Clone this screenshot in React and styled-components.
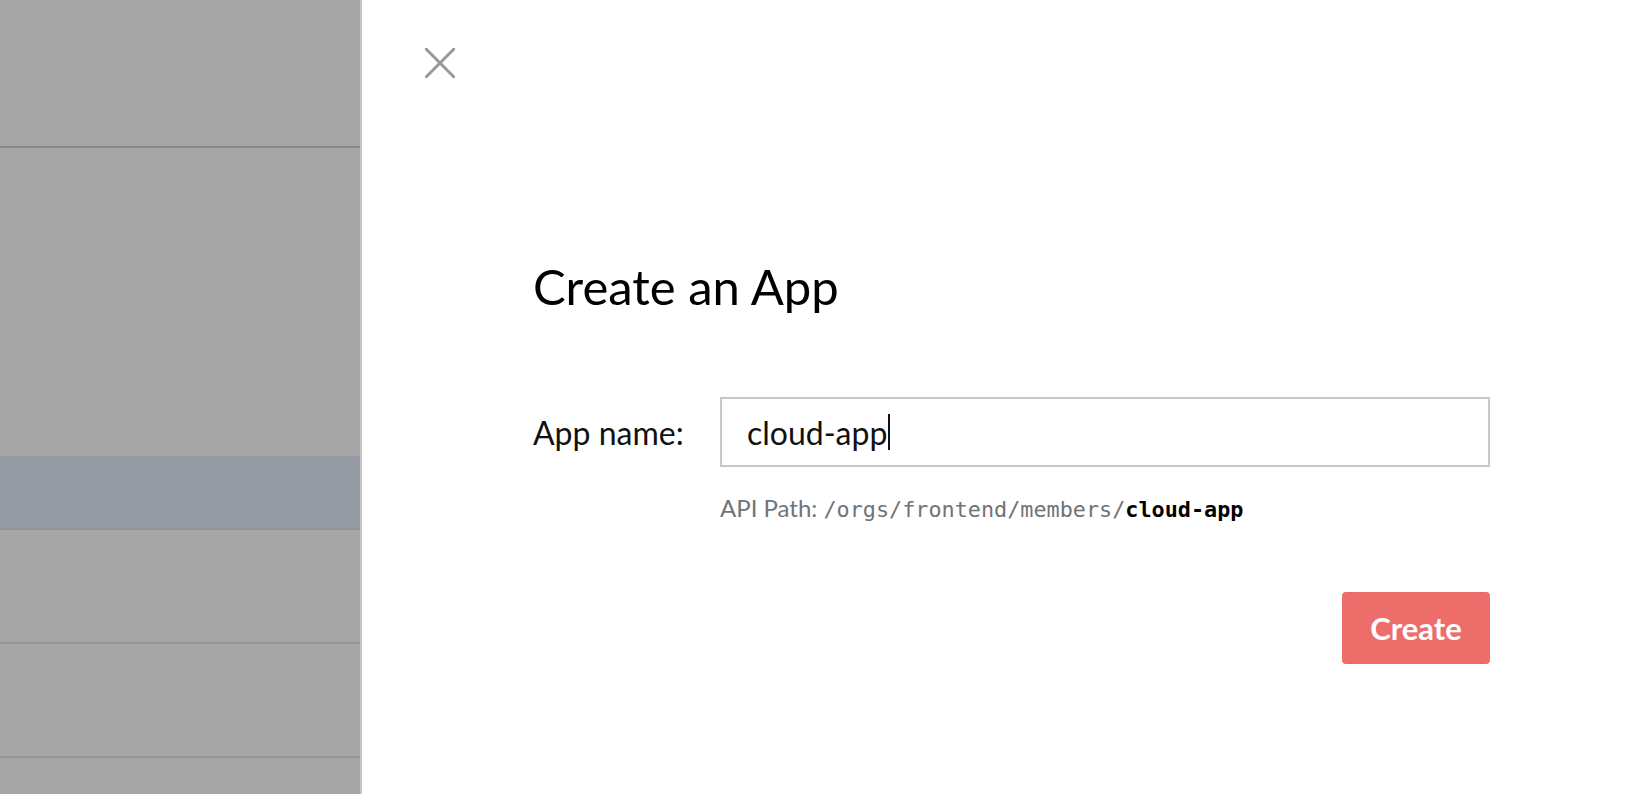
import React from 'react';
import styled, { createGlobalStyle } from 'styled-components';

const GlobalStyle = createGlobalStyle`
  html, body {
    margin: 0;
    padding: 0;
    height: 100%;
    overflow: hidden;
  }
  body {
    font-family: Lato, "Noto Sans", sans-serif;
    background: #fff;
  }
`;

const Page = styled.div`
  display: flex;
  width: 1646px;
  height: 794px;
`;

const Backdrop = styled.div`
  width: 360px;
  flex-shrink: 0;
  background: #a6a6a6;
  border-right: 2px solid #c6c6c6;
  display: flex;
  flex-direction: column;
`;

const Row = styled.div`
  box-sizing: border-box;
  height: ${(p) => p.$h}px;
  flex-shrink: 0;
  background: ${(p) => (p.$active ? '#979ba3' : 'transparent')};
  border-bottom: ${(p) => (p.$line ? `2px solid ${p.$line}` : 'none')};
`;

const Drawer = styled.div`
  flex: 1;
  background: #fff;
  padding: 48px 0 0 63px;
  display: flex;
  flex-direction: column;
`;

const CloseButton = styled.button`
  width: 30px;
  height: 30px;
  padding: 0;
  border: none;
  background: none;
  cursor: pointer;
  svg {
    display: block;
  }
`;

const Content = styled.div`
  margin: 179px 0 0 108px;
  width: 957px;
  display: flex;
  flex-direction: column;
`;

const Title = styled.h1`
  margin: 0;
  font-size: 49px;
  line-height: 58px;
  font-weight: 400;
  color: #000;
`;

const FieldRow = styled.div`
  display: flex;
  align-items: center;
  margin-top: 82px;
`;

const Label = styled.label`
  width: 187px;
  font-size: 32px;
  color: #111;
`;

const Input = styled.div`
  flex: 1;
  height: 70px;
  box-sizing: border-box;
  border: 2px solid #c8c8c8;
  padding: 0 25px;
  display: flex;
  align-items: center;
  font-size: 32px;
  color: #111;
`;

const Caret = styled.span`
  display: inline-block;
  width: 2px;
  height: 36px;
  background: #111;
  margin-left: 1px;
  vertical-align: middle;
`;

const Hint = styled.div`
  margin: 26px 0 0 187px;
  font-size: 24px;
  color: #6f7479;
`;

const Code = styled.code`
  font-family: "DejaVu Sans Mono", "Liberation Mono", monospace;
  font-size: 21.8px;
  color: ${(p) => (p.$strong ? '#000' : '#6f7479')};
  font-weight: ${(p) => (p.$strong ? 700 : 400)};
`;

const Actions = styled.div`
  display: flex;
  justify-content: flex-end;
  margin-top: 70px;
`;

const PrimaryButton = styled.button`
  width: 148px;
  height: 72px;
  border: none;
  border-radius: 4px;
  background: #ed6d6b;
  color: #fff;
  font-family: Lato, "Noto Sans", sans-serif;
  font-size: 31px;
  font-weight: 700;
  cursor: pointer;
`;

export default function App() {
  return (
    <>
      <GlobalStyle />
      <Page>
        <Backdrop>
          <Row $h={148} $line="#878787" />
          <Row $h={308} />
          <Row $h={74} $active $line="#939393" />
          <Row $h={114} $line="#959595" />
          <Row $h={114} $line="#959595" />
          <Row $h={36} />
        </Backdrop>
        <Drawer>
          <CloseButton aria-label="Close">
            <svg width="30" height="30" viewBox="0 0 30 30">
              <path d="M1 1 L29 29 M29 1 L1 29" stroke="#999" strokeWidth="3" strokeLinecap="round" />
            </svg>
          </CloseButton>
          <Content>
            <Title>Create an App</Title>
            <FieldRow>
              <Label>App name:</Label>
              <Input>
                cloud-app
                <Caret />
              </Input>
            </FieldRow>
            <Hint>
              API Path: <Code>/orgs/frontend/members/</Code>
              <Code $strong>cloud-app</Code>
            </Hint>
            <Actions>
              <PrimaryButton>Create</PrimaryButton>
            </Actions>
          </Content>
        </Drawer>
      </Page>
    </>
  );
}
